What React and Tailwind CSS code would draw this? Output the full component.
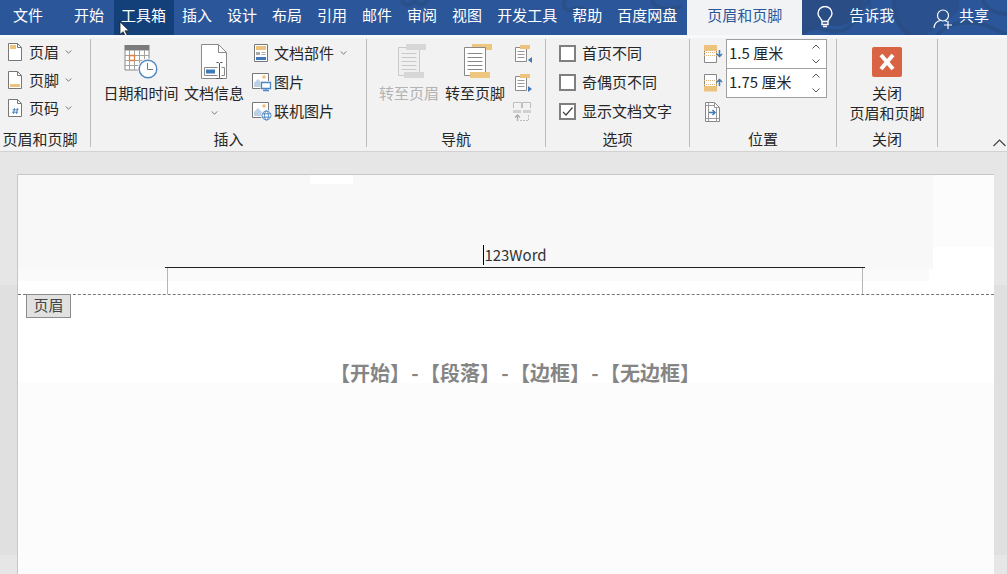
const Chevron = ({ up = false, className = "w-[7px] h-[4px]" }) => (
  <svg viewBox="0 0 8 5" className={className} fill="none" stroke="#555" strokeWidth="1" aria-hidden="true">
    <path d={up ? "M.5 4.5 4 1l3.500 3.500" : "M.5.5 4 4 7.500.5"} />
  </svg>
);

function PageIcon({ kind }) {
  return (
    <svg viewBox="0 0 16 20" className="w-4 h-5 shrink-0" fill="none" aria-hidden="true">
      <path d="M1.500 1.500h9l4 4v13h-13z" fill="#fff" stroke="#777" />
      <path d="M10.500 1.500v4h4" stroke="#777" />
      {kind === "header" && <path d="M3 3h6v4H3z" fill="#ecc27c" />}
      {kind === "footer" && <path d="M3 14h10v3H3z" fill="#ecc27c" />}
      {kind === "number" && <path d="M7.500 10 6.500 16M10.500 10l-1 6M5.500 11.800h6M5 14.200h6" stroke="#3f7ab8" strokeWidth=".9" />}
    </svg>
  );
}

function DateTimeIcon() {
  return (
    <svg viewBox="0 0 36 36" className="w-9 h-9" fill="none" aria-hidden="true">
      <path d="M2 6h24v20H2z" fill="#fff" stroke="#8a8a8a" />
      <path d="M6.500 6v20M11.500 6v20M16.500 6v20M21.500 6v20M2 11.500h24M2 16.500h24M2 21.500h24" stroke="#a2a2a2" />
      <path d="M1.500 1h25v5h-25z" fill="#7b7b7b" />
      <path d="M6.500 11.500h5v5h-5z" fill="#fff" stroke="#df8244" strokeWidth="1.300" />
      <circle cx="25" cy="25" r="10.500" fill="#f2f2f2" />
      <circle cx="25" cy="25" r="8.800" fill="#fff" stroke="#4f88c4" strokeWidth="1.400" />
      <path d="M24.500 19v6.500H30" stroke="#777" />
    </svg>
  );
}

function DocInfoIcon() {
  return (
    <svg viewBox="0 0 30 38" className="w-[30px] h-[38px]" fill="none" aria-hidden="true">
      <path d="M2.500 1.500h17l8 8v26h-25z" fill="#fff" stroke="#8a8a8a" />
      <path d="M19.500 1.500v8h8" stroke="#8a8a8a" />
      <path d="M5.500 24.500h20v8h-20z" fill="#fff" stroke="#8a8a8a" />
      <path d="M7 26.500h9v4H7z" fill="#3f7ab8" />
      <path d="M20.500 20v15" stroke="#fff" strokeWidth="4" />
      <path d="M17.500 19.500h2l1 1 1-1h2M20.500 20.500v14M17.500 35.500h2l1-1 1 1h2" stroke="#555" />
    </svg>
  );
}

function PartsIcon() {
  return (
    <svg viewBox="1 0 20 20" className="w-5 h-5 shrink-0" fill="none" aria-hidden="true">
      <path d="M3.500 1.500h13v17h-13z" fill="#fff" stroke="#777" />
      <path d="M5 3h10v4H5z" fill="#ecc27c" />
      <path d="M5 9h4v3H5z" fill="#aaa" />
      <path d="M10.500 9.500h4M10.500 11.500h4" stroke="#aaa" />
      <path d="M5 14h10v3H5z" fill="#3f7ab8" />
    </svg>
  );
}

function PictureIcon({ online = false }) {
  return (
    <svg viewBox="0 0 20 20" className="w-5 h-5 shrink-0" fill="none" aria-hidden="true">
      <path d="M.5 1.500h16v15H.5z" fill="#fff" stroke="#777" />
      <circle cx="12" cy="5" r="1.800" fill="#ecc27c" />
      <path d="M2 15v-4l4-4 4 4v4z" fill="#bcd0e8" />
      {online ? (
        <g stroke="#4f88c4">
          <circle cx="14.500" cy="14.500" r="5.300" fill="#fff" stroke="#f2f2f2" />
          <circle cx="14.500" cy="14.500" r="4.500" fill="#fff" />
          <ellipse cx="14.500" cy="14.500" rx="2" ry="4.500" />
          <path d="M10.500 12.800h8M10.500 16.200h8" />
        </g>
      ) : (
        <g>
          <path d="M8.500 9H20v11H8.500z" fill="#f2f2f2" />
          <path d="M9.500 10.500h9v6h-9z" fill="#fff" stroke="#4f88c4" strokeWidth="1.300" />
          <path d="M14 16.500v2M11 18.500h6" stroke="#4f88c4" strokeWidth="1.300" />
        </g>
      )}
    </svg>
  );
}

function GotoIcon({ disabled = false }) {
  const line = disabled ? "#c9c9c9" : "#888";
  const bar = disabled ? "#d7d7d7" : "#edc67f";
  return (
    <svg viewBox="0 0 32 38" className="w-8 h-[38px] ml-2" fill="none" aria-hidden="true">
      <path d="M9 1h20v6H9z" fill={bar} />
      <path d="M1.500 4.500h21v28h-21z" fill={disabled ? "#f0f0f0" : "#fff"} stroke={line} />
      <path d="M4.500 10.500h15M4.500 14.500h15M4.500 18.500h15M4.500 22.500h15M4.500 26.500h15" stroke={line} />
      {disabled && <path d="M9 1h20v6H9z" fill={bar} />}
      <path d="M7 29h20v6H7z" fill={bar} />
    </svg>
  );
}

function SectionIcon({ next = false }) {
  return (
    <svg viewBox="0 0 20 20" className="w-5 h-5" fill="none" aria-hidden="true">
      <path d="M2.500 3.500h11v14h-11z" fill="#fff" stroke="#8a8a8a" />
      <path d="M4.500 7.500h7M4.500 10.500h7M4.500 13.500h7" stroke="#999" />
      <path d="M7 1h10v4H7z" fill="#ecc27c" />
      <path d={next ? "M15 13v6l4-3z" : "M19 13v6l-4-3z"} fill="#3f7ab8" />
    </svg>
  );
}

function LinkIcon() {
  return (
    <svg viewBox="0 0 20 20" className="w-5 h-5" fill="none" stroke="#bdbdbd" aria-hidden="true">
      <path d="M.5 6V.5h8V6M9.500 6V.5h8V6" />
      <path d="M0 8h8v3H0zM10 8h8v3h-8z" fill="#d0d0d0" stroke="none" />
      <path d="M4.500 19v-6M2 15.500l2.500-2.500L7 15.500" stroke="#aaa" strokeWidth="1.300" />
      <path d="M7 18.500h8.500V12" strokeDasharray="2 1" />
    </svg>
  );
}

function PositionIcon({ kind }) {
  return (
    <svg viewBox="0 0 20 20" className="w-5 h-5 shrink-0" fill="none" aria-hidden="true">
      {kind === "top" && (
        <g>
          <path d="M1.500 6v12.500h12V6" fill="#fff" stroke="#888" />
          <path d="M1 1h13v6H1z" fill="#ecc27c" />
          <path d="M1 8.500h13M1 11.500h13" stroke="#e3b878" strokeDasharray="1 1" />
          <path d="M16.500 6v7M14 10l2.500 2.500L19 10" stroke="#3f7ab8" strokeWidth="1.500" />
        </g>
      )}
      {kind === "bottom" && (
        <g>
          <path d="M1.500 14V1.500h12V14" fill="#fff" stroke="#888" />
          <path d="M1 13h13v5.500H1z" fill="#ecc27c" />
          <path d="M1 7.500h13M1 11.500h13" stroke="#e3b878" strokeDasharray="1 1" />
          <path d="M16.500 13V6M14 9l2.500-2.500L19 9" stroke="#3f7ab8" strokeWidth="1.500" />
        </g>
      )}
      {kind === "align" && (
        <g>
          <path d="M2.500.5h9l5 5v14h-14z" fill="#fff" stroke="#888" />
          <path d="M11.500.5v5h5M5.500.5v19M13.500 5v14.500M2.500 3.500h9M2.500 16.500h14" stroke="#999" />
          <path d="M6 10.500h6M9.500 8l2.500 2.500L9.500 13" stroke="#3f7ab8" strokeWidth="1.500" />
        </g>
      )}
    </svg>
  );
}

function Group({ label, width, children }) {
  return (
    <section aria-label={label} className={"flex flex-col shrink-0 h-[108px] border-r border-[#bcbcbc] " + width}>
      <div className="flex-1 flex">{children}</div>
      <div className="h-4 leading-[15px] text-center whitespace-nowrap">{label}</div>
    </section>
  );
}

const Row = ({ children, className = "" }) => (
  <button type="button" className={"flex items-center pb-[2px] whitespace-nowrap " + className}>{children}</button>
);

const tabs = ["插入", "设计", "布局", "引用", "邮件", "审阅", "视图", "开发工具", "帮助", "百度网盘"];

function TabBar() {
  return (
    <nav className="relative flex h-[35px] bg-[#2b579a] text-white whitespace-nowrap overflow-hidden">
      <svg className="absolute right-0 top-0 w-[640px] h-[35px]" viewBox="0 0 640 35" fill="none" stroke="#294b80" strokeWidth="4" aria-hidden="true">
        <path d="M35 0c2 7 10 6 13-1 3 8 10 7 12 1M198 0c-3 8 1 12 8 9s13 0 16 5M285 0c3 8 14 12 30 6" strokeOpacity=".6" />
        <path d="M435 0h62c-4 8-6 16-14 22-14 10-24-4-48 12z" fill="#294b80" fillOpacity=".85" stroke="none" />
        <path d="M435 34c16-14 26 2 42-4 14-6 12-20 26-30" strokeOpacity=".7" />
        <path d="M496 0h-1M502 0c-2 10 2 18 8 22M528 0h64v10c-8 10-20 14-32 25h-20c-8-10-13-22-12-35z" fill="#294b80" fillOpacity=".5" stroke="none" />
        <path d="M527 0c-1 14 4 26 14 35M570 35c10-12 24-14 40-12 12 2 20 8 30 12M616 0c2 8 12 14 24 14" strokeOpacity=".7" />
      </svg>
      <button type="button" className="relative w-[67px] pl-[13px] pb-[5px] text-left">文件</button>
      <button type="button" className="relative w-[47px] pl-[7px] pb-[5px] text-left">开始</button>
      <button type="button" className="relative pl-[7px] pr-2 pb-[5px] bg-[#134079]">工具箱</button>
      <div className="flex pl-px pr-[2px]">
        {tabs.map((t) => (
          <button type="button" key={t} className="relative pl-[7px] pr-2 pb-[5px]">{t}</button>
        ))}
      </div>
      <button type="button" className="relative w-[115px] pb-[5px] bg-[#f2f3f4] text-[#2b579a]">页眉和页脚</button>
      <button type="button" className="relative flex items-center gap-4 pl-[15px] pb-[5px]">
        <svg viewBox="0 0 16 22" className="w-4 h-[22px] mt-1" fill="none" stroke="#fff" strokeWidth="1.400" aria-hidden="true">
          <path d="M5 15.500c0-3-4-4-4-8a7 7 0 0 1 14 0c0 4-4 5-4 8zM5 15.500v3h6v-3M6 20.500h4" />
        </svg>
        告诉我
      </button>
      <button type="button" className="relative ml-auto mr-[18px] flex items-center gap-[6px] pb-[5px]">
        <svg viewBox="0 0 20 20" className="w-5 h-5 mt-2" fill="none" stroke="#fff" strokeWidth="1.200" aria-hidden="true">
          <circle cx="10" cy="6.500" r="5.500" />
          <path d="M1 19c0-4 3-7 6.500-7.500M12 11.500l2 1M15 12v8M11 16h8" />
        </svg>
        共享
      </button>
      <svg viewBox="0 0 12 18" className="absolute left-[119px] top-[21px] w-[11px] h-4" aria-hidden="true">
        <path d="M1 1v14l3.500-3 2.500 5 2-1-2.500-5H11z" fill="#fff" stroke="#222" strokeWidth=".8" />
      </svg>
    </nav>
  );
}

function Check({ label, checked }) {
  return (
    <label className="flex items-center gap-[6px] h-[29px] whitespace-nowrap">
      <span className="relative grid w-[17px] h-[17px]">
        <input type="checkbox" defaultChecked={checked} className="peer appearance-none w-[17px] h-[17px] bg-white border-2 border-[#7f7f7f]" />
        <svg viewBox="0 0 17 17" className="absolute inset-0 hidden peer-checked:block" fill="none" stroke="#444" strokeWidth="1.200" aria-hidden="true">
          <path d="m4 9 3 3 6.500-7.500" />
        </svg>
      </span>
      <span className="pb-[2px]">{label}</span>
    </label>
  );
}

function Spin({ label, value }) {
  return (
    <div className="flex h-[30px] -mb-px border border-[#a0a0a0] bg-white w-[101px]">
      <input aria-label={label} defaultValue={value} className="min-w-0 flex-1 pl-[2px] pb-[2px] outline-none bg-transparent text-[#262626]" />
      <div className="flex flex-col justify-between py-1 pr-[6px]">
        <button type="button" aria-label="增加" className="flex"><Chevron up className="w-2 h-[5px]" /></button>
        <button type="button" aria-label="减少" className="flex"><Chevron className="w-2 h-[5px]" /></button>
      </div>
    </div>
  );
}

function Ribbon() {
  return (
    <div className="flex pt-[1px] h-[114px] bg-[#f2f2f2] border-b border-[#d2d2d2] text-[#262626]">
      <Group label="页眉和页脚" width="w-[91px] [&>div:last-child]:pr-[10px]">
        <div className="flex flex-col pl-[7px]">
          <Row className="h-7 gap-[6px]"><PageIcon kind="header" />页眉<Chevron /></Row>
          <Row className="h-7 gap-[6px]"><PageIcon kind="footer" />页脚<Chevron /></Row>
          <Row className="h-7 gap-[6px]"><PageIcon kind="number" />页码<Chevron /></Row>
        </div>
      </Group>
      <Group label="插入" width="w-[276px]">
        <button type="button" className="flex flex-col items-center w-[80px] ml-[10px] pt-[5px]">
          <DateTimeIcon />
          <span className="mt-[3px] whitespace-nowrap">日期和时间</span>
        </button>
        <button type="button" className="flex flex-col items-center w-[66px] pt-1">
          <DocInfoIcon />
          <span className="mt-[2px] mb-[8px] whitespace-nowrap">文档信息</span>
          <Chevron />
        </button>
        <div className="flex flex-col ml-[5px]">
          <Row className="h-[29px] gap-[2px]"><PartsIcon />文档部件<Chevron className="w-[7px] h-[4px] ml-1" /></Row>
          <Row className="h-[29px] gap-[2px]"><PictureIcon />图片</Row>
          <Row className="h-[29px] gap-[2px]"><PictureIcon online />联机图片</Row>
        </div>
      </Group>
      <Group label="导航" width="w-[179px]">
        <button type="button" disabled className="flex flex-col items-center w-[66px] ml-[9px] pt-1 text-[#b3b3b3]">
          <GotoIcon disabled />
          <span className="mt-[2px] whitespace-nowrap">转至页眉</span>
        </button>
        <button type="button" className="flex flex-col items-center w-[66px] pt-1">
          <GotoIcon />
          <span className="mt-[2px] whitespace-nowrap">转至页脚</span>
        </button>
        <div className="flex flex-col ml-[5px]">
          <button type="button" aria-label="上一节" className="flex items-center h-[29px]"><SectionIcon /></button>
          <button type="button" aria-label="下一节" className="flex items-center h-[29px]"><SectionIcon next /></button>
          <button type="button" aria-label="链接到前一节" disabled className="flex items-center h-[29px]"><LinkIcon /></button>
        </div>
      </Group>
      <Group label="选项" width="w-[144px]">
        <div className="flex flex-col ml-[13px]">
          <Check label="首页不同" />
          <Check label="奇偶页不同" />
          <Check label="显示文档文字" checked />
        </div>
      </Group>
      <Group label="位置" width="w-[147px]">
        <div className="flex flex-col ml-[13px]">
          <div className="flex items-center gap-[3px] h-[29px]"><PositionIcon kind="top" /><Spin label="页眉顶端距离" value="1.5 厘米" /></div>
          <div className="flex items-center gap-[3px] h-[29px]"><PositionIcon kind="bottom" /><Spin label="页脚底端距离" value="1.75 厘米" /></div>
          <button type="button" aria-label="插入对齐制表位" className="flex items-center h-[29px]"><PositionIcon kind="align" /></button>
        </div>
      </Group>
      <Group label="关闭" width="w-[101px]">
        <button type="button" className="flex flex-col items-center w-full pt-2">
          <svg viewBox="0 0 30 30" className="w-[30px] h-[30px]" aria-hidden="true">
            <rect width="30" height="30" rx="2" fill="#d96443" />
            <path d="m9 8 12 14M21 8 9 22" stroke="#fff" strokeWidth="4" />
          </svg>
          <span className="mt-[6px] leading-[20px]">关闭<br />页眉和页脚</span>
        </button>
      </Group>
      <div className="flex-1 flex items-end justify-end pb-1 pr-[1px]">
        <button type="button" aria-label="折叠功能区">
          <svg viewBox="0 0 13 8" className="w-[13px] h-2" fill="none" stroke="#444" strokeWidth="1.200" aria-hidden="true">
            <path d="M.5 7 6.500 1l6 6" />
          </svg>
        </button>
      </div>
    </div>
  );
}

function Document() {
  return (
    <main className="flex-1 flex flex-col pt-[22px] pl-[17px] pr-[13px] bg-[linear-gradient(#e6e6e6_133px,#e0e0e0_133px,#e0e0e0_403px,#e6e6e6_403px)]">
      <article className="flex-1 flex flex-col border-t border-l border-[#c6c6c6] bg-[#fcfcfc]">
        <header className="relative flex flex-col justify-end h-[120px] pl-[147px] pr-[129px] border-b border-dashed border-[#777] bg-white bg-[linear-gradient(#fff,#fff),linear-gradient(#f8f8f8,#f8f8f8),linear-gradient(#fafafa,#fafafa),linear-gradient(#fcfcfc,#fcfcfc)] bg-no-repeat bg-[size:43px_9px,calc(100%-61px)_94px,calc(100%-65px)_106px,100%_72px] bg-[position:292px_0px,0px_0px,0px_0px,0px_0px]">
          <p className="flex items-center justify-center h-[22px] pb-[2px] text-[#333]">
            <span className="w-px h-5 bg-black" />123Word
          </p>
          <div className="border-t border-[#222] h-[27px] px-[2px]">
            <div className="h-full border-x border-[#b5b5b5]" />
          </div>
          <span className="absolute left-2 top-[119px] w-[45px] h-6 leading-[20px] text-center border border-[#8c8c8c] bg-[#e1e1e1] text-[#444]">页眉</span>
        </header>
        <div className="h-[88px] pt-[63px] pl-[147px] pr-[129px] bg-white">
          <h1 className="flex justify-center text-[20px] leading-[30px] font-bold text-[#858585] whitespace-nowrap">
            【开始】<span className="w-[10px] text-center">-</span>【段落】<span className="w-[10px] text-center">-</span>【边框】<span className="w-[10px] text-center">-</span>【无边框】
          </h1>
        </div>
      </article>
    </main>
  );
}

export default function App() {
  return (
    <div className="min-h-screen flex flex-col bg-[#f8f9fa] text-[15px] leading-[20px] font-['Noto_Sans_CJK_SC',sans-serif]">
      <TabBar />
      <div className="pt-[3px]"><Ribbon /></div>
      <Document />
    </div>
  );
}
